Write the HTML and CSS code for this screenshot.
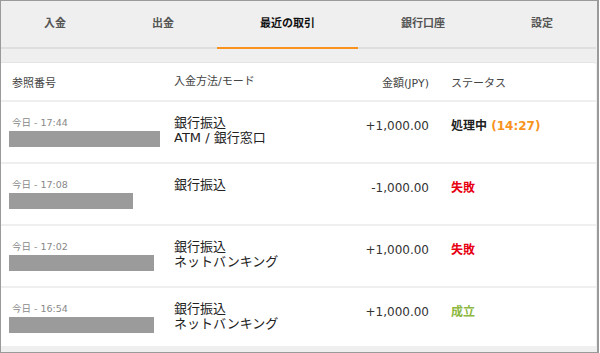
FILE: index.html
```html
<!DOCTYPE html>
<html lang="ja">
<head>
<meta charset="utf-8">
<link rel="stylesheet" href="styles.css">
</head>
<body>
<div class="frame">
  <nav class="tabs">
    <div class="tab">入金</div>
    <div class="tab">出金</div>
    <div class="tab active">最近の取引</div>
    <div class="tab">銀行口座</div>
    <div class="tab">設定</div>
  </nav>
  <div class="card">
    <div class="row head">
      <div class="c1">参照番号</div>
      <div class="c2">入金方法/モード</div>
      <div class="c3">金額(JPY)</div>
      <div class="c4">ステータス</div>
    </div>
    <div class="row">
      <div class="c1"><div class="date">今日 - 17:44</div><div class="mask" style="width:151px"></div></div>
      <div class="c2">銀行振込<br>ATM / 銀行窓口</div>
      <div class="c3 amt">+1,000.00</div>
      <div class="c4 st"><span class="proc">処理中</span> <span class="timer">(14:27)</span></div>
    </div>
    <div class="row">
      <div class="c1"><div class="date">今日 - 17:08</div><div class="mask" style="width:124px"></div></div>
      <div class="c2">銀行振込</div>
      <div class="c3 amt">-1,000.00</div>
      <div class="c4 st fail">失敗</div>
    </div>
    <div class="row">
      <div class="c1"><div class="date">今日 - 17:02</div><div class="mask" style="width:145px"></div></div>
      <div class="c2">銀行振込<br>ネットバンキング</div>
      <div class="c3 amt">+1,000.00</div>
      <div class="c4 st fail">失敗</div>
    </div>
    <div class="row">
      <div class="c1"><div class="date">今日 - 16:54</div><div class="mask" style="width:145px"></div></div>
      <div class="c2">銀行振込<br>ネットバンキング</div>
      <div class="c3 amt">+1,000.00</div>
      <div class="c4 st ok">成立</div>
    </div>
  </div>
</div>
</body>
</html>
```

FILE: styles.css
```css
* { box-sizing: border-box; }
html, body { margin: 0; padding: 0; background: #fff; }
body { font-family: "DejaVu Sans", "Noto Sans CJK JP", sans-serif; }
.frame {
  width: 599px;
  height: 353px;
  border: 1px solid #9a9a9a;
  border-right-width: 2px;
  background: #efefef;
  padding-right: 1px;
  display: flex;
  flex-direction: column;
}
.tabs {
  display: flex;
  height: 48px;
  border-bottom: 2px solid #dedede;
}
.tab {
  flex: 1 1 auto;
  text-align: center;
  font-size: 11px;
  font-weight: bold;
  color: #555;
  line-height: 46px;
  margin-bottom: -2px;
}
.tab.active {
  color: #111;
  border-bottom: 2px solid #f7931e;
}
.card {
  margin-top: 13px;
  background: #fff;
  border-top: 1px solid #e4e4e4;
  border-top-right-radius: 3px;
  height: 284px;
}
.row {
  display: grid;
  grid-template-columns: 165px 120px 135px 1fr;
  padding-left: 8px;
  height: 62px;
  padding-top: 13px;
  border-top: 2px solid #efefef;
  align-items: start;
}
.row.head {
  height: 37px;
  border-top: none;
  padding-top: 0;
  align-items: center;
  font-size: 11px;
  color: #444;
}
.head .c1 { padding-left: 3px; }
.c2 { font-size: 13px; line-height: 15px; color: #222; }
.head .c2 { font-size: 11px; color: #444; }
.c3 { text-align: right; }
.c4 { padding-left: 22px; }
.date { font-size: 9.5px; color: #888; padding-left: 3px; line-height: 14px; margin-top: 1px; }
.mask { height: 16px; background: #9b9b9b; margin-top: 1px; }
.amt { font-size: 12px; color: #333; line-height: 16px; margin-top: 3px; }
.st { font-size: 12px; font-weight: bold; line-height: 16px; margin-top: 3px; }
.proc { color: #222; }
.timer { color: #f7931e; }
.fail { color: #e60012; }
.ok { color: #8cb83f; }
```
